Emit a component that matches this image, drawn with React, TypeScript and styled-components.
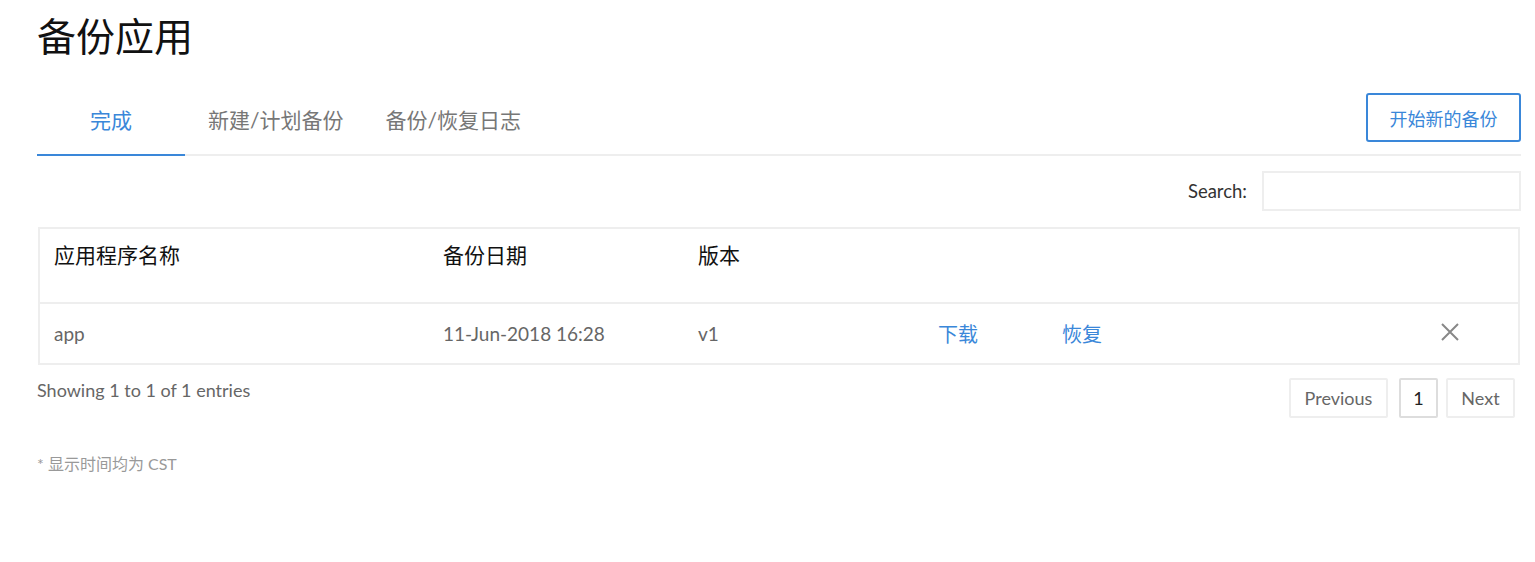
import { createGlobalStyle } from "styled-components";
import styled from "styled-components";

const GlobalStyle = createGlobalStyle`
  body {
    margin: 0;
    background: #fff;
    font-family: Lato, "Noto Sans CJK SC", sans-serif;
    color: #333;
  }
`;

const Page = styled.div`
  padding: 8px 14px 40px 37px;
`;

const Title = styled.h1`
  margin: 0;
  font-size: 39px;
  font-weight: 400;
  line-height: 56px;
  color: #111;
`;

const TabBar = styled.div`
  display: flex;
  align-items: flex-end;
  justify-content: space-between;
  margin-top: 29px;
  border-bottom: 2px solid #eee;
`;

const Tabs = styled.div`
  display: flex;
`;

const Tab = styled.div<{ $active?: boolean }>`
  font-size: 21px;
  line-height: 24px;
  padding: 14px 0 22px;
  margin-bottom: -2px;
  color: ${(p) => (p.$active ? "#3a87d9" : "#777")};
  border-bottom: 2px solid ${(p) => (p.$active ? "#3a87d9" : "transparent")};
  text-align: center;
  width: ${(p) => (p.$active ? "148px" : "auto")};
  margin-right: ${(p) => (p.$active ? "23px" : "42px")};
`;

const PrimaryButton = styled.button`
  align-self: center;
  margin-bottom: 12px;
  height: 49px;
  width: 155px;
  border: 2px solid #3a87d9;
  border-radius: 3px;
  background: #fff;
  color: #3a87d9;
  font-family: inherit;
  font-size: 18px;
`;

const SearchRow = styled.div`
  display: flex;
  justify-content: flex-end;
  align-items: center;
  gap: 15px;
  margin-top: 15px;
`;

const SearchLabel = styled.label`
  font-size: 18.5px;
  color: #333;
`;

const SearchInput = styled.input`
  width: 259px;
  height: 40px;
  box-sizing: border-box;
  border: 2px solid #eee;
  outline: none;
`;

const Table = styled.table`
  margin: 16px 1px 0 1px;
  width: calc(100% - 2px);
  border-collapse: collapse;
  border: 2px solid #eee;
  table-layout: fixed;
`;

const Th = styled.th<{ $w?: number }>`
  width: ${(p) => (p.$w ? `${p.$w}px` : "auto")};
  box-sizing: border-box;
  text-align: left;
  font-weight: 400;
  font-size: 21px;
  line-height: 24px;
  color: #111;
  height: 75px;
  vertical-align: top;
  padding: 14px 14px 0;
  border-bottom: 2px solid #eee;
`;

const Td = styled.td<{ $link?: boolean }>`
  height: 59px;
  padding: 0 14px;
  font-size: ${(p) => (p.$link ? "20px" : "19px")};
  color: ${(p) => (p.$link ? "#3a87d9" : "#666")};
  vertical-align: middle;
`;

const CloseCell = styled.td`
  text-align: right;
  padding: 0 58px 0 0;
  vertical-align: middle;
`;

const Footer = styled.div`
  display: flex;
  justify-content: space-between;
  align-items: flex-start;
  margin-top: 13px;
`;

const Info = styled.div`
  font-size: 18px;
  color: #666;
  margin-top: 1px;
`;

const Pager = styled.div`
  display: flex;
  gap: 8px;
  margin-right: 6px;
`;

const PageBtn = styled.div<{ $current?: boolean; $w: number }>`
  width: ${(p) => p.$w}px;
  height: 40px;
  box-sizing: border-box;
  display: flex;
  align-items: center;
  justify-content: center;
  border: 2px solid ${(p) => (p.$current ? "#ddd" : "#eee")};
  border-radius: 2px;
  font-size: 18px;
  color: ${(p) => (p.$current ? "#222" : "#666")};
  &:first-child {
    margin-right: 3px;
  }
`;

const Note = styled.div`
  margin-top: 33px;
  font-size: 16px;
  color: #999;
`;

export default function App() {
  return (
    <>
      <GlobalStyle />
      <Page>
        <Title>备份应用</Title>
        <TabBar>
          <Tabs>
            <Tab $active>完成</Tab>
            <Tab>新建/计划备份</Tab>
            <Tab>备份/恢复日志</Tab>
          </Tabs>
          <PrimaryButton>开始新的备份</PrimaryButton>
        </TabBar>
        <SearchRow>
          <SearchLabel>Search:</SearchLabel>
          <SearchInput />
        </SearchRow>
        <Table>
          <thead>
            <tr>
              <Th $w={390}>应用程序名称</Th>
              <Th $w={255}>备份日期</Th>
              <Th $w={240}>版本</Th>
              <Th $w={124}></Th>
              <Th></Th>
              <Th $w={110}></Th>
            </tr>
          </thead>
          <tbody>
            <tr>
              <Td>app</Td>
              <Td>11-Jun-2018 16:28</Td>
              <Td>v1</Td>
              <Td $link>下载</Td>
              <Td $link>恢复</Td>
              <CloseCell>
                <svg width="20" height="20" viewBox="0 0 20 20">
                  <path d="M2 2 L18 18 M18 2 L2 18" stroke="#888" strokeWidth="2" />
                </svg>
              </CloseCell>
            </tr>
          </tbody>
        </Table>
        <Footer>
          <Info>Showing 1 to 1 of 1 entries</Info>
          <Pager>
            <PageBtn $w={99}>Previous</PageBtn>
            <PageBtn $w={39} $current>1</PageBtn>
            <PageBtn $w={69}>Next</PageBtn>
          </Pager>
        </Footer>
        <Note>* 显示时间均为 CST</Note>
      </Page>
    </>
  );
}
